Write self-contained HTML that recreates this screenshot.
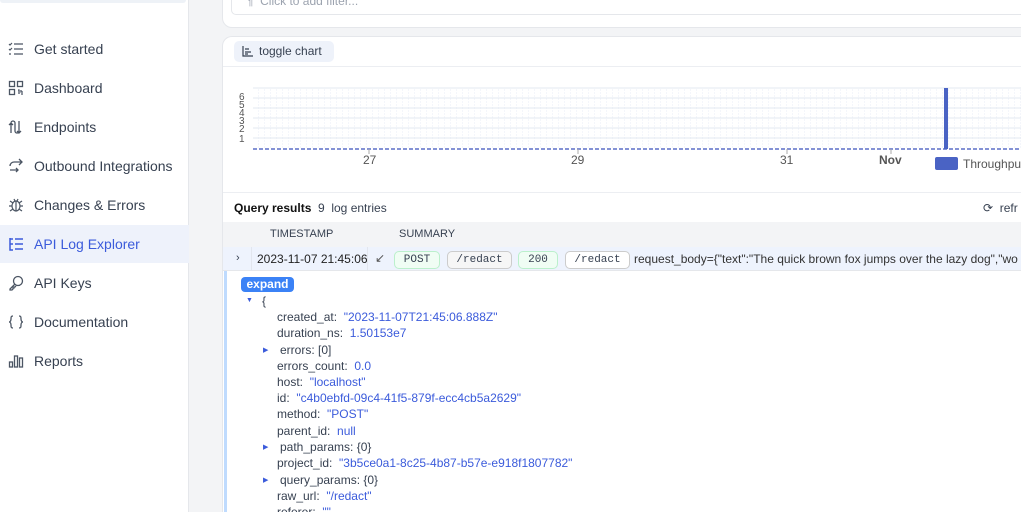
<!DOCTYPE html>
<html style="width:1021px;height:512px;overflow:hidden"><head><meta charset="utf-8"><style>
*{margin:0;padding:0;box-sizing:border-box}
body{width:1021px;height:512px;overflow:hidden;background:#f3f4f6;font-family:"Liberation Sans",sans-serif;color:#1f2937;position:relative;font-size:13px}
.a{position:absolute;white-space:nowrap}
#side{position:absolute;left:0;top:0;width:189px;height:512px;background:#fff;border-right:1px solid #e5e7eb}
.nav{position:absolute;left:0;width:189px;height:38px;display:flex;align-items:center;font-size:14px;color:#374151}
.nav .ic{width:16px;height:16px;margin-left:8px;margin-right:10px;color:#4b5563}
.nav.act{background:#eef2fb;color:#3b5bdb}
.nav.act .ic{color:#3b5bdb}
.pill{position:absolute;top:251px;height:18px;border-radius:5px;font-family:"Liberation Mono",monospace;font-size:11px;display:flex;align-items:center;justify-content:center;color:#374151}
.j{position:absolute;font-size:12px;color:#374151;white-space:nowrap}
.j b{font-weight:normal;color:#3b5bdb}
.tri{position:absolute;font-size:7px;color:#3b5bdb}
</style></head><body>
<div id="side">
<div class="a" style="left:0;top:0;width:186px;height:3px;background:#eef2f7;border-radius:0 0 4px 4px"></div>
<div class="nav" style="top:30px"><svg class="ic" viewBox="0 0 16 16" fill="none" stroke="currentColor" stroke-width="1.2"><path d="M1 3l1 1 2-2M1 8l1 1 2-2M1 13h2M6 3h9M6 8h9M6 13h9"/></svg>Get started</div>
<div class="nav" style="top:69px"><svg class="ic" viewBox="0 0 16 16" fill="none" stroke="currentColor" stroke-width="1.3"><rect x="1.5" y="1.5" width="5" height="5"/><rect x="9.5" y="1.5" width="5" height="5"/><rect x="1.5" y="9.5" width="5" height="5"/><path d="M10 10h1v4M13 10v2h2M13 14h2"/></svg>Dashboard</div>
<div class="nav" style="top:108px"><svg class="ic" viewBox="0 0 16 16" fill="none" stroke="currentColor" stroke-width="1.3"><path d="M3 14V4a2 2 0 014 0v8a2 2 0 004 0V2M1 6l2-2 2 2M9 12l2 2 2-2"/></svg>Endpoints</div>
<div class="nav" style="top:147px"><svg class="ic" viewBox="0 0 16 16" fill="none" stroke="currentColor" stroke-width="1.3"><path d="M14 4H6a4 4 0 00-4 4M11 1l3 3-3 3M2 12h8M8 10l2 2-2 2"/></svg>Outbound Integrations</div>
<div class="nav" style="top:186px"><svg class="ic" viewBox="0 0 16 16" fill="none" stroke="currentColor" stroke-width="1.2"><ellipse cx="8" cy="9" rx="4" ry="5"/><path d="M8 4v10M4 9H1M15 9h-3M2 4l3 2M14 4l-3 2M2 14l3-2M14 14l-3-2M6 2l1 2M10 2l-1 2"/></svg>Changes &amp; Errors</div>
<div class="nav act" style="top:225px"><svg class="ic" viewBox="0 0 16 16" fill="none" stroke="currentColor" stroke-width="1.5"><path d="M2 2v12h3M2 8h3M7 3h8M7 8h8M7 13h8M2 3h3"/></svg>API Log Explorer</div>
<div class="nav" style="top:264px"><svg class="ic" viewBox="0 0 16 16" fill="none" stroke="currentColor" stroke-width="1.3"><circle cx="10" cy="6" r="4.5"/><path d="M7 9l-5 5v1h2l1-1v-1h1v-1h1l1-1"/></svg>API Keys</div>
<div class="nav" style="top:303px"><svg class="ic" viewBox="0 0 16 16" fill="none" stroke="currentColor" stroke-width="1.3"><path d="M5 2c-2 0-2 1-2 3s-1 3-2 3c1 0 2 1 2 3s0 3 2 3M11 2c2 0 2 1 2 3s1 3 2 3c-1 0-2 1-2 3s0 3-2 3"/></svg>Documentation</div>
<div class="nav" style="top:342px"><svg class="ic" viewBox="0 0 16 16" fill="none" stroke="currentColor" stroke-width="1.3"><rect x="1.5" y="9" width="3" height="5"/><rect x="6.5" y="3" width="3" height="11"/><rect x="11.5" y="5" width="3" height="9"/></svg>Reports</div>
</div>

<div class="a" style="left:222px;top:-10px;width:810px;height:38px;background:#fff;border:1px solid #e5e7eb;border-radius:10px"></div>
<div class="a" style="left:231px;top:-10px;width:800px;height:25px;border:1px solid #e5e7eb;border-radius:5px;background:#fff"></div>
<div class="a" style="left:247px;top:-6px;font-size:12px;color:#9ca3af">¶ &nbsp;Click to add filter...</div>

<div class="a" style="left:222px;top:36px;width:810px;height:476px;background:#fff;border:1px solid #e5e7eb;border-bottom:none;border-radius:10px 10px 0 0"></div>
<div class="a" style="left:234px;top:41px;width:100px;height:21px;background:#eef2fa;border-radius:5px"></div>
<svg class="a" style="left:242px;top:46px" width="11" height="11" viewBox="0 0 11 11" fill="none" stroke="#374151" stroke-width="1.2"><path d="M1 0v10h10M3 3h4M3 6h6M3 8h3"/></svg>
<div class="a" style="left:259px;top:44px;font-size:12px;color:#374151">toggle chart</div>
<div class="a" style="left:223px;top:66px;width:800px;height:1px;background:#eceef2"></div>

<svg class="a" style="left:223px;top:80px" width="800" height="100">
<defs><pattern id="g" width="6" height="6" patternUnits="userSpaceOnUse"><path d="M6 0V6" stroke="#e8edf7" stroke-dasharray="2 1"/></pattern></defs>
<rect x="30" y="8" width="770" height="61" fill="url(#g)"/>
<g stroke="#e3e8f2"><line x1="30" y1="8" x2="800" y2="8"/><line x1="30" y1="18" x2="800" y2="18"/><line x1="30" y1="28" x2="800" y2="28"/><line x1="30" y1="38" x2="800" y2="38"/><line x1="30" y1="48" x2="800" y2="48"/><line x1="30" y1="58" x2="800" y2="58"/></g>
<line x1="30" y1="69" x2="800" y2="69" stroke="#5b6fc7" stroke-width="1.5" stroke-dasharray="4 2"/>
<g stroke="#aaa"><line x1="146" y1="69" x2="146" y2="74"/><line x1="355" y1="69" x2="355" y2="74"/><line x1="564" y1="69" x2="564" y2="74"/><line x1="668" y1="69" x2="668" y2="74"/></g>
<rect x="721" y="8" width="4" height="61" fill="#4a63c4"/>
<g font-size="10" fill="#555" font-family="Liberation Sans"><text x="16" y="20">6</text><text x="16" y="28">5</text><text x="16" y="36">4</text><text x="16" y="44">3</text><text x="16" y="52">2</text><text x="16" y="62">1</text>
<text x="140" y="84" font-size="12">27</text><text x="348" y="84" font-size="12">29</text><text x="557" y="84" font-size="12">31</text><text x="656" y="84" font-size="12" font-weight="bold">Nov</text></g>
<rect x="712" y="77" width="23" height="13" rx="2" fill="#4a63c4"/>
<text x="740" y="88" font-size="12" fill="#555" font-family="Liberation Sans">Throughput</text>
</svg>
<div class="a" style="left:223px;top:192px;width:800px;height:1px;background:#eceef2"></div>

<div class="a" style="left:234px;top:201px;font-size:12px;font-weight:bold;color:#111">Query results</div>
<div class="a" style="left:318px;top:201px;font-size:12px;color:#374151">9 &nbsp;log entries</div>
<div class="a" style="left:983px;top:201px;font-size:12px;color:#374151">⟳ &nbsp;refr</div>

<div class="a" style="left:223px;top:222px;width:800px;height:25px;background:#f3f4f6"></div>
<div class="a" style="left:270px;top:228px;font-size:11px;color:#374151">TIMESTAMP</div>
<div class="a" style="left:399px;top:228px;font-size:11px;color:#374151">SUMMARY</div>

<div class="a" style="left:223px;top:247px;width:800px;height:24px;background:#eef3fd;border-bottom:1px solid #e5e7eb"></div>
<div class="a" style="left:251px;top:247px;width:1px;height:24px;background:#e2e6ee"></div>
<div class="a" style="left:367px;top:247px;width:1px;height:24px;background:#e2e6ee"></div>
<div class="a" style="left:236px;top:252px;font-size:11px;color:#374151">›</div>
<div class="a" style="left:257px;top:252px;font-size:12px;color:#222;width:110px;overflow:hidden">2023-11-07 21:45:06</div>
<div class="a" style="left:375px;top:251px;font-size:12px;color:#555">↙</div>
<div class="pill" style="left:394px;width:46px;border:1px solid #bbf0cc;background:#f0fdf4">POST</div>
<div class="pill" style="left:447px;width:65px;border:1px solid #ccc;background:#f6f6f6">/redact</div>
<div class="pill" style="left:518px;width:40px;border:1px solid #bbf0cc;background:#f0fdf4">200</div>
<div class="pill" style="left:565px;width:65px;border:1px solid #ccc;background:#fff">/redact</div>
<div class="a" style="left:634px;top:252px;font-size:12px;color:#333">request_body={"text":"The quick brown fox jumps over the lazy dog","wo</div>

<div class="a" style="left:224px;top:271px;width:3px;height:241px;background:#bfdbfe"></div>
<div class="a" style="left:241px;top:277px;width:53px;height:15px;background:#3b82f6;border-radius:4px;color:#fff;font-size:12px;font-weight:bold;text-align:center;line-height:15px">expand</div>
<div class="tri" style="left:246px;top:297px">▼</div>
<div class="j" style="left:262px;top:294px">{</div>
<div class="j" style="left:277px;top:310px">created_at: &nbsp;<b>"2023-11-07T21:45:06.888Z"</b></div>
<div class="j" style="left:277px;top:326px">duration_ns: &nbsp;<b>1.50153e7</b></div>
<div class="tri" style="left:263px;top:346px">▶</div>
<div class="j" style="left:280px;top:343px">errors: [0]</div>
<div class="j" style="left:277px;top:359px">errors_count: &nbsp;<b>0.0</b></div>
<div class="j" style="left:277px;top:375px">host: &nbsp;<b>"localhost"</b></div>
<div class="j" style="left:277px;top:391px">id: &nbsp;<b>"c4b0ebfd-09c4-41f5-879f-ecc4cb5a2629"</b></div>
<div class="j" style="left:277px;top:407px">method: &nbsp;<b>"POST"</b></div>
<div class="j" style="left:277px;top:424px">parent_id: &nbsp;<b>null</b></div>
<div class="tri" style="left:263px;top:443px">▶</div>
<div class="j" style="left:280px;top:440px">path_params: {0}</div>
<div class="j" style="left:277px;top:456px">project_id: &nbsp;<b>"3b5ce0a1-8c25-4b87-b57e-e918f1807782"</b></div>
<div class="tri" style="left:263px;top:476px">▶</div>
<div class="j" style="left:280px;top:473px">query_params: {0}</div>
<div class="j" style="left:277px;top:489px">raw_url: &nbsp;<b>"/redact"</b></div>
<div class="j" style="left:277px;top:505px">referer: &nbsp;<b>""</b></div>
</body></html>
